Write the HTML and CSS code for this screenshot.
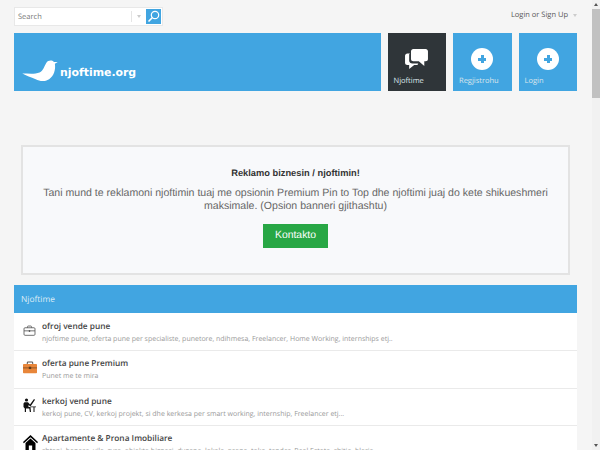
FILE: index.html
```html
<!DOCTYPE html>
<html lang="en">
<head>
    <meta charset="UTF-8">
    <title>njoftime.org</title>
    <link rel="stylesheet" href="styles.css">
</head>
<body>
    <div class="page">
        <div class="top-bar">
            <form class="search">
                <span class="search-text">Search</span>
                <span class="search-sep"></span>
                <span class="caret search-caret"></span>
                <span class="search-btn">
                    <svg width="13" height="13" viewBox="0 0 13 13" fill="none" stroke="#fff">
                        <circle cx="8" cy="5" r="3.7" stroke-width="1.2"/>
                        <path d="M5.2 7.8L1.5 11.5" stroke-width="1.6"/>
                    </svg>
                </span>
            </form>
            <div class="user-link">Login or Sign Up <span class="caret"></span></div>
        </div>

        <div class="header">
            <div class="logo-box">
                <svg class="bird" width="37" height="23" viewBox="0 0 38 24">
                    <path fill="#fff" d="M0 14C6 14 13 15 18 13C22 11 23 6 25 3C27 0 31 0 33 2L37 2L34 4C35 10 33 17 28 20C23 23 18 22 14 20C9 18 4 16 0 14Z"/>
                </svg>
                <span class="logo-text">njoftime.org</span>
            </div>
            <a class="tile tile-dark">
                <svg class="tile-icon" width="25" height="22" viewBox="0 0 26 24" fill="#fff">
                    <path d="M6 6H3C1.600 6 .5 7.100 .5 8.500V16C.5 17.400 1.600 18.500 3 18.500H5V23L10.500 18.500H14L15 17H8.500C6.500 17 5 15.500 5 14V7C5 6.600 5.500 6.200 6 6Z"/>
                    <path d="M9.500 1H23C24.400 1 25.500 2.100 25.500 3.500V12C25.500 13.400 24.400 14.500 23 14.500H21.500V19.500L15.500 14.500H9.500C8.100 14.500 7 13.400 7 12V3.500C7 2.100 8.100 1 9.500 1Z"/>
                </svg>
                <span class="tile-label">Njoftime</span>
            </a>
            <a class="tile">
                <span class="plus-icon"></span>
                <span class="tile-label">Regjistrohu</span>
            </a>
            <a class="tile">
                <span class="plus-icon"></span>
                <span class="tile-label">Login</span>
            </a>
        </div>

        <div class="promo">
            <h3 class="promo-title">Reklamo biznesin / njoftimin!</h3>
            <p class="promo-text">Tani mund te reklamoni njoftimin tuaj me opsionin Premium Pin to Top dhe njoftimi juaj do kete shikueshmeri maksimale. (Opsion banneri gjithashtu)</p>
            <a class="promo-btn">Kontakto</a>
        </div>

        <div class="panel">
            <div class="panel-head">Njoftime</div>
            <div class="row row-a">
                <span class="row-thumb">
                    <svg width="13" height="11" viewBox="0 0 18 16" fill="none" stroke="#555" stroke-width="1.200">
                        <path d="M6 4V2.500C6 2 6.500 1.500 7 1.500H11C11.500 1.500 12 2 12 2.500V4"/>
                        <rect x="1" y="4" width="16" height="11" rx="1.500"/>
                        <path d="M1 8.500H17"/>
                        <rect x="8" y="7.500" width="2" height="2.500" fill="#555" stroke="none"/>
                    </svg>
                </span>
                <div class="row-body">
                    <div class="row-title">ofroj vende pune</div>
                    <div class="row-desc">njoftime pune, oferta pune per specialiste, punetore, ndihmesa, Freelancer, Home Working, internships etj..</div>
                </div>
            </div>
            <div class="row row-b">
                <span class="row-thumb">
                    <svg width="14" height="13" viewBox="0 0 18 16">
                        <path fill="none" stroke="#555" stroke-width="1.300" d="M5.500 4V1.800C5.500 1.200 6 .8 6.500 .8H11.500C12 .8 12.500 1.200 12.500 1.800V4"/>
                        <rect x="0" y="3.500" width="18" height="12" rx="1" fill="#e8863a"/>
                        <path stroke="#7a4a20" stroke-width="1" d="M0 8.500H18"/>
                        <rect x="7.500" y="7" width="3" height="3" fill="#5a3a1c"/>
                    </svg>
                </span>
                <div class="row-body">
                    <div class="row-title">oferta pune Premium</div>
                    <div class="row-desc">Punet me te mira</div>
                </div>
            </div>
            <div class="row row-a">
                <span class="row-thumb">
                    <svg width="13" height="14" viewBox="0 0 13 14" fill="#111">
                        <circle cx="3.500" cy="2" r="1.600"/>
                        <path d="M1.500 4.200H5L7 6.500L11 1L12 1.700L7.500 8.500L5.500 7V9H7.500L8 14H6.800L6.300 10.500H3V14H1.800V10.500L.5 9V5.500L1.500 4.200Z"/>
                        <path d="M7.500 8.500H13V9.300H11.500V14H10.500V9.300H7.500Z"/>
                    </svg>
                </span>
                <div class="row-body">
                    <div class="row-title">kerkoj vend pune</div>
                    <div class="row-desc">kerkoj pune, CV, kerkoj projekt, si dhe kerkesa per smart working, internship, Freelancer etj...</div>
                </div>
            </div>
            <div class="row row-a">
                <span class="row-thumb">
                    <svg width="15" height="15" viewBox="0 0 18 18" fill="#000">
                        <path d="M9 0L18 8.500L17 10L9 2.800L1 10L0 8.500L9 0Z"/>
                        <path d="M3 9.500L9 4.200L15 9.500V18H11V12.500H7V18H3V9.500Z"/>
                    </svg>
                </span>
                <div class="row-body">
                    <div class="row-title">Apartamente &amp; Prona Imobiliare</div>
                    <div class="row-desc">shtepi, banese, vila, zyra, objekte biznesi, dyqane, lokale, prona, toka, tender, Real Estate, shitje, blerje</div>
                </div>
            </div>
        </div>
    </div>

    <div class="scrollbar">
        <span class="scroll-up"></span>
        <span class="scroll-thumb"></span>
        <span class="scroll-down"></span>
    </div>
</body>
</html>
```

FILE: styles.css
```css
html, body {
    height: 100%;
    overflow: hidden;
}

body {
    margin: 0;
    background-color: #f5f5f5;
    color: #444;
    font-family: 'Open Sans', sans-serif;
    text-rendering: geometricPrecision;
}

.page {
    width: 563px;
    margin-left: 14px;
}

.caret {
    display: inline-block;
    border-left: 2.500px solid transparent;
    border-right: 2.500px solid transparent;
    border-top: 3px solid #ccc;
    vertical-align: middle;
    margin-left: 3px;
}

/* top bar */
.top-bar {
    display: flex;
    justify-content: space-between;
    align-items: center;
    height: 33px;
}

.search {
    display: flex;
    align-items: center;
    box-sizing: border-box;
    width: 149px;
    height: 19px;
    margin: 0;
    background-color: #fff;
    border: 1px solid #e8e8e8;
}

.search-text {
    flex: 1;
    padding-left: 3px;
    font-size: 7.500px;
    color: #777;
}

.search-sep {
    width: 1px;
    height: 11px;
    background-color: #e5e5e5;
}

.search-caret {
    margin: 0 5px 0 5px;
}

.search-btn {
    display: flex;
    align-items: center;
    justify-content: center;
    width: 15px;
    height: 15px;
    margin-right: 1px;
    background-color: #41a5e1;
}

.user-link {
    font-size: 7.500px;
    color: #555;
    margin-top: -3px;
}

/* header tiles */
.header {
    display: flex;
    gap: 7px;
    height: 58px;
}

.logo-box {
    flex: 1;
    display: flex;
    align-items: flex-end;
    padding: 0 0 8px 8px;
    background-color: #41a5e1;
}

.bird {
    margin-right: 1px;
}

.logo-text {
    margin-bottom: 1px;
    font-family: 'DejaVu Sans', sans-serif;
    font-size: 10.900px;
    font-weight: bold;
    line-height: 19px;
    color: #fff;
}

.tile {
    position: relative;
    display: flex;
    flex-direction: column;
    align-items: center;
    box-sizing: border-box;
    width: 58.500px;
    padding-top: 15px;
    background-color: #41a5e1;
}

.tile-dark {
    background-color: #2f3539;
}

.plus-icon {
    position: relative;
    width: 22px;
    height: 22px;
    border-radius: 50%;
    background-color: #fff;
}

.plus-icon::before,
.plus-icon::after {
    content: "";
    position: absolute;
    background-color: #41a5e1;
}

.plus-icon::before {
    left: 7px;
    top: 10px;
    width: 8px;
    height: 3px;
}

.plus-icon::after {
    left: 10px;
    top: 7px;
    width: 3px;
    height: 8px;
}

.tile-label {
    position: absolute;
    left: 6px;
    bottom: 4px;
    font-size: 7.500px;
    line-height: 11px;
    color: #dce6ec;
}

/* promo box */
.promo {
    box-sizing: border-box;
    width: 549px;
    height: 130px;
    margin: 54px 0 10px 7px;
    padding: 20px 10px 0;
    background-color: #f8f9fb;
    border: 2px solid #e3e3e3;
    font-family: 'Liberation Sans', sans-serif;
    text-align: center;
}

.promo-title {
    margin: 0 0 7px;
    font-size: 9.300px;
    line-height: 13px;
    font-weight: bold;
    color: #333;
}

.promo-text {
    margin: 0 0 11px;
    font-size: 10.550px;
    line-height: 13px;
    color: #666;
}

.promo-btn {
    display: inline-block;
    padding: 0 12px;
    height: 24px;
    line-height: 24px;
    background-color: #28a745;
    color: #fff;
    font-size: 10.400px;
}

/* category list */
.panel {
    background-color: #fff;
}

.panel-head {
    height: 28px;
    padding-left: 7px;
    line-height: 30px;
    font-size: 8.400px;
    color: #dcebf5;
    background-color: #41a5e1;
    border-bottom: 1px solid #fff;
}

.row {
    display: flex;
    align-items: flex-start;
    box-sizing: border-box;
    padding: 7px 0 0 9px;
    border-bottom: 1px solid #eaeaea;
}

.row-a {
    height: 37px;
}

.row-b {
    height: 38px;
}

.row-thumb {
    flex: none;
    display: flex;
    align-items: center;
    width: 19px;
    height: 20px;
    margin-top: -1px;
}

.row-title {
    font-size: 8.300px;
    font-weight: 600;
    line-height: 11px;
    color: #444;
}

.row-desc {
    margin-top: 2px;
    font-size: 7px;
    line-height: 11px;
    color: #999;
}

/* window scrollbar */
.scrollbar {
    position: fixed;
    top: 0;
    right: 0;
    bottom: 0;
    width: 8px;
    background-color: #f1f1f1;
}

.scroll-thumb {
    position: absolute;
    top: 9px;
    left: 0;
    width: 8px;
    height: 89px;
    background-color: #c1c1c1;
}

.scroll-up,
.scroll-down {
    position: absolute;
    left: 2px;
    border-left: 2px solid transparent;
    border-right: 2px solid transparent;
}

.scroll-up {
    top: 3px;
    border-bottom: 3px solid #555;
}

.scroll-down {
    bottom: 3px;
    border-top: 3px solid #555;
}
```
